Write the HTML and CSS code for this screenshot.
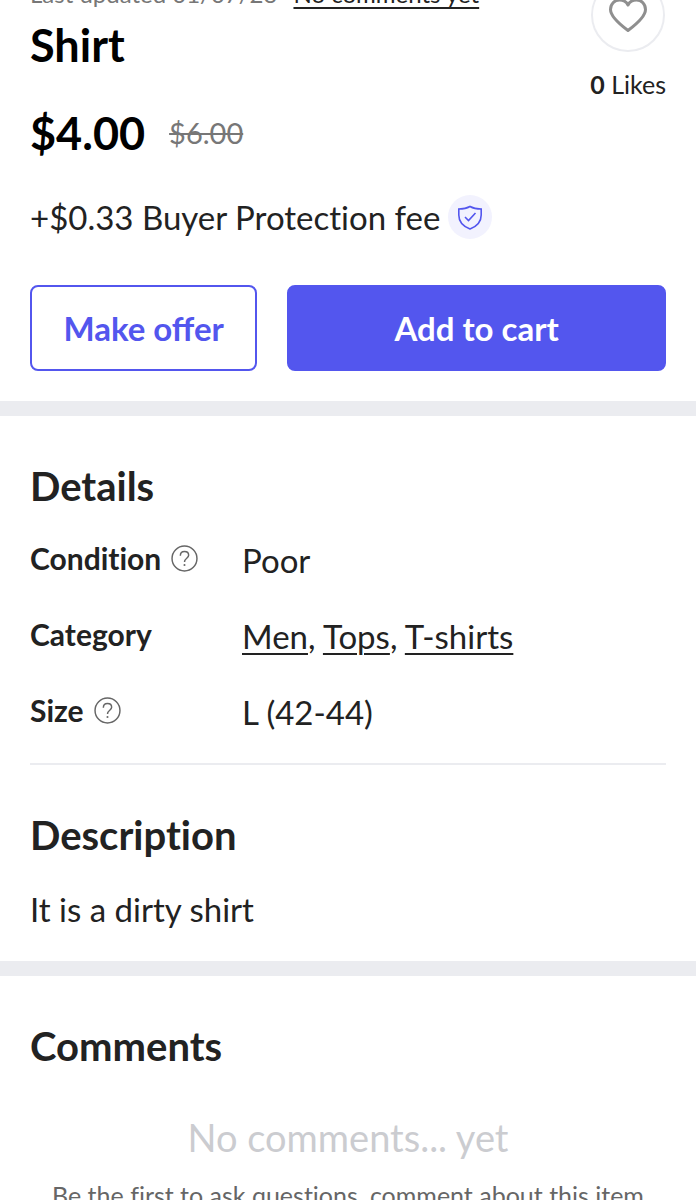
FILE: index.html
```html
<!DOCTYPE html>
<html lang="en">
<head>
    <meta charset="UTF-8">
    <meta name="viewport" content="width=device-width, initial-scale=1.0">
    <title>Shirt</title>
    <link rel="stylesheet" href="styles.css">
</head>
<body>
    <main>
        <!-- Item summary -->
        <section class="section summary">
            <div class="top">
                <div class="info">
                    <p class="meta"><span>Last updated 01/07/23</span><a href="#comments">No comments yet</a></p>
                    <h1>Shirt</h1>
                    <p class="prices"><span class="price">$4.00</span><s class="old-price">$6.00</s></p>
                </div>
                <div class="likes">
                    <button class="like-button" aria-label="Like">
                        <svg width="40" height="36" viewBox="0 0 40 36" fill="none" stroke="#8f8f8f" stroke-width="3" stroke-linejoin="round">
                            <path d="M20 33.500 C14 29 2.500 20.500 2.500 12.500 C2.500 7 6.500 3 11.500 3 C15.500 3 18.500 5 20 8 C21.500 5 24.500 3 28.500 3 C33.500 3 37.500 7 37.500 12.500 C37.500 20.500 26 29 20 33.500 Z"/>
                        </svg>
                    </button>
                    <p class="likes-count"><strong>0</strong> Likes</p>
                </div>
            </div>
            <p class="fee">
                <span>+$0.33 Buyer Protection fee</span>
                <span class="shield">
                    <svg width="26" height="26" viewBox="0 0 26 26" fill="none" stroke="#5356ee" stroke-width="1.600">
                        <path d="M13 2.500 C10 4.200 6 5 1.800 5 V11 C1.800 18 6.500 22.500 13 25 C19.500 22.500 24.200 18 24.200 11 V5 C20 5 16 4.200 13 2.500 Z"/>
                        <path d="M8 13 L11.500 16.500 L18.500 9"/>
                    </svg>
                </span>
            </p>
            <div class="actions">
                <button class="btn btn-outline">Make offer</button>
                <button class="btn btn-primary">Add to cart</button>
            </div>
        </section>

        <!-- Details -->
        <section class="section">
            <h2>Details</h2>
            <dl class="details">
                <dt>Condition
                    <svg class="help" viewBox="0 0 26 26" fill="none" stroke="#666" stroke-width="1.400">
                        <circle cx="13" cy="13" r="12"/>
                        <path d="M9 10.300 C9 7.800 10.600 6.300 13 6.300 C15.400 6.300 17 7.800 17 9.900 C17 12.700 13 12.800 13 16.300"/>
                        <circle cx="13" cy="19.300" r="1" fill="#666" stroke="none"/>
                    </svg>
                </dt>
                <dd>Poor</dd>
                <dt>Category</dt>
                <dd><a href="#">Men</a>, <a href="#">Tops</a>, <a href="#">T-shirts</a></dd>
                <dt>Size
                    <svg class="help" viewBox="0 0 26 26" fill="none" stroke="#666" stroke-width="1.400">
                        <circle cx="13" cy="13" r="12"/>
                        <path d="M9 10.300 C9 7.800 10.600 6.300 13 6.300 C15.400 6.300 17 7.800 17 9.900 C17 12.700 13 12.800 13 16.300"/>
                        <circle cx="13" cy="19.300" r="1" fill="#666" stroke="none"/>
                    </svg>
                </dt>
                <dd>L (42-44)</dd>
            </dl>
            <hr>
            <h2>Description</h2>
            <p class="description">It is a dirty shirt</p>
        </section>

        <!-- Comments -->
        <section class="section" id="comments">
            <h2>Comments</h2>
            <div class="empty">
                <p class="empty-title">No comments... yet</p>
                <p class="empty-text">Be the first to ask questions, comment about this item</p>
            </div>
        </section>
    </main>
</body>
</html>
```
FILE: styles.css
```css
* {
    box-sizing: border-box;
}
body {
    margin: 0;
    height: 100vh;
    overflow: hidden;
    font-family: Lato, sans-serif;
    font-size: 33px;
    line-height: 44px;
    font-variant-ligatures: none;
    color: #222;
    background-color: #fff;
}
/* page is scrolled slightly past the first line */
main {
    margin-top: -22px;
}
h1, h2, p, dl, dd {
    margin: 0;
}
a {
    color: inherit;
    text-decoration-thickness: 2px;
    text-underline-offset: 4px;
}
button {
    font-family: inherit;
    cursor: pointer;
}
.section {
    padding: 46px 30px 30px;
    border-bottom: 15px solid #ebecf0;
}
.section:last-child {
    border-bottom: none;
}
.summary {
    padding-top: 0;
}
.top {
    display: flex;
    justify-content: space-between;
}
.meta {
    display: flex;
    gap: 16px;
    font-size: 24px;
    line-height: 32px;
    color: #777;
}
.meta a {
    color: #222;
}
h1 {
    margin-top: 9px;
    font-size: 45px;
    line-height: 52px;
    font-weight: 700;
    color: #000;
}
.prices {
    display: flex;
    align-items: center;
    gap: 24px;
    margin-top: 36px;
    line-height: 52px;
}
.price {
    font-size: 45px;
    font-weight: 700;
    color: #000;
}
.old-price {
    font-size: 29px;
    color: #777;
}
.likes {
    display: flex;
    flex-direction: column;
    align-items: center;
}
.like-button {
    display: flex;
    align-items: center;
    justify-content: center;
    width: 74px;
    height: 74px;
    padding: 0;
    border: 2px solid #ebecf0;
    border-radius: 50%;
    background-color: #fff;
}
.likes-count {
    margin-top: 16px;
    font-size: 25px;
    line-height: 32px;
}
.fee {
    display: flex;
    gap: 8px;
    margin-top: 36px;
}
.shield {
    display: flex;
    align-items: center;
    justify-content: center;
    width: 44px;
    height: 44px;
    border-radius: 50%;
    background-color: #f2f2fe;
}
.actions {
    display: grid;
    grid-template-columns: 3fr 5fr;
    gap: 30px;
    margin-top: 46px;
}
.btn {
    height: 86px;
    padding: 0;
    border: 2px solid #5356ee;
    border-radius: 8px;
    font-size: 33px;
    font-weight: 700;
}
.btn-outline {
    background-color: #fff;
    color: #5356ee;
}
.btn-primary {
    background-color: #5356ee;
    color: #fff;
}
h2 {
    font-size: 40px;
    line-height: 48px;
    font-weight: 700;
}
.details {
    display: grid;
    grid-template-columns: 1fr 2fr;
    row-gap: 32px;
    margin-top: 28px;
}
dt {
    display: flex;
    align-items: center;
    gap: 10px;
    font-size: 30px;
    line-height: 40px;
    height: 40px;
    font-weight: 700;
}
.help {
    width: 27px;
    height: 27px;
}
hr {
    height: 2px;
    margin: 29px 0 46px;
    border: none;
    background-color: #ebecf0;
}
.description {
    margin-top: 28px;
}
.empty {
    margin-top: 43px;
    text-align: center;
}
.empty-title {
    font-size: 38px;
    line-height: 48px;
    color: #cbccd0;
}
.empty-text {
    margin-top: 18px;
    font-size: 25px;
    line-height: 32px;
    color: #666;
}
```
